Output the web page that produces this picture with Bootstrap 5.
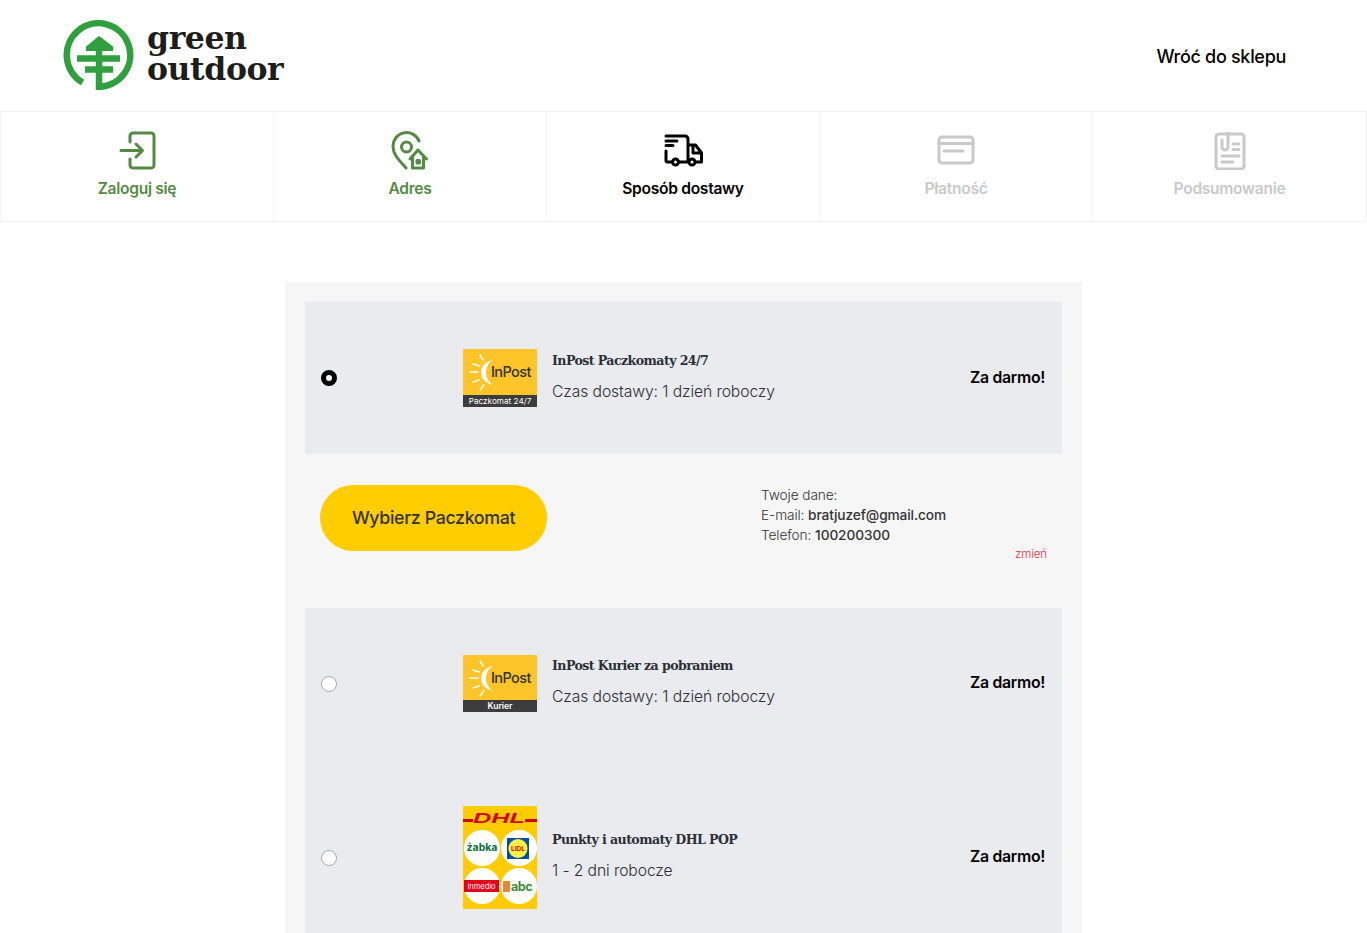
<!DOCTYPE html>
<html lang="pl">
<head>
    <meta charset="UTF-8">
    <meta name="viewport" content="width=device-width, initial-scale=1.0">
    <title>Green Outdoor - Sposób dostawy</title>
    <link href="https://cdn.jsdelivr.net/npm/bootstrap@5.3.0/dist/css/bootstrap.min.css" rel="stylesheet">
    <style>
        html, body { height: 933px; overflow: hidden; }
        body { font-family: Inter, "Liberation Sans", sans-serif; color: #212529; background: #fff; }
        .shop-head { height: 111px; padding: 0 81px 0 63px; }
        .brand-word { font-family: "DejaVu Serif", serif; font-weight: 700; font-size: 31.5px; line-height: 30.5px; color: #1d1d1b; letter-spacing: -.4px; margin-left: 13px; margin-bottom: 4px; }
        .back-link { font-size: 18px; font-weight: 500; color: #000; text-decoration: none; letter-spacing: -.3px; padding-top: 2px; }
        .step-bar { grid-template-columns: repeat(4, 273px) 1fr; }
        .step-cell { height: 111px; border: 1px solid #f4f4f4; border-right-width: 0; padding-top: 18px; font-size: 15.6px; font-weight: 600; letter-spacing: -.3px; text-align: center; }
        .step-cell:last-child { border-right-width: 1px; }
        .step-cell svg { display: block; margin: 0 auto 7px; fill: none; stroke: currentColor; stroke-width: 3; stroke-linecap: round; stroke-linejoin: round; }
        .step-done { color: #558a44; }
        .step-now { color: #000; }
        .step-next { color: #c9c9c9; }
        .order-panel { width: 797px; margin: 60px auto 0; padding: 20px; background: #f6f6f6; }
        .ship-row { background: #e9ebee; }
        .ship-line { padding: 47px 17px 47px 16px; }
        .ship-line .form-check-input { width: 16px; height: 16px; margin: 0 126px 0 0; flex: none; border-color: #aaa; }
        .ship-line .form-check-input:checked { background-image: none; background-color: #fff; border: 5px solid #000; }
        .ship-logo { width: 74px; flex: none; display: block; }
        .ship-text { margin-left: 15px; padding-bottom: 3px; }
        .ship-name { font-family: "DejaVu Serif", serif; font-weight: 700; font-size: 12.6px; letter-spacing: -.58px; color: #2b2f36; margin-bottom: 12px; line-height: 18px; }
        .ship-time { font-size: 15.7px; font-weight: 300; letter-spacing: -.1px; line-height: 20px; color: #2b2f36; }
        .ship-price { font-size: 15.8px; font-weight: 600; letter-spacing: -.3px; color: #000; padding-bottom: 1px; }
        .locker-box { padding: 31px 15px 24px; height: 154px; }
        .locker-btn { width: 227px; height: 66px; border-radius: 33px; background: #ffcd00; border: 0; font-size: 17.8px; font-weight: 500; letter-spacing: -.35px; color: #333; }
        .buyer-info { width: 286px; font-size: 13.7px; line-height: 20px; font-weight: 300; color: #333; letter-spacing: -.1px; }
        .buyer-info b { font-weight: 500; }
        .buyer-edit { display: block; text-align: right; font-size: 11.5px; color: #e5303f; text-decoration: none; margin-top: -1px; }
        .logo-txt { font-family: Inter, sans-serif; }
    </style>
</head>
<body>
    <header class="shop-head d-flex justify-content-between align-items-center">
        <a class="d-flex align-items-center text-decoration-none" href="#">
            <svg width="71" height="72" viewBox="63 20 71 72" fill="none">
                <path d="M82.600 82.500A31.750 31.750 0 1 1 98.500 86.750" stroke="#2fa03d" stroke-width="6.500"/>
                <path d="M99 38V90" stroke="#2fa03d" stroke-width="6.500"/>
                <path d="M99 36L86 46.500V51H113V46.500z" fill="#2fa03d"/>
                <path d="M77 58.500h43M85 69.500h28" stroke="#2fa03d" stroke-width="6.500"/>
            </svg>
            <span class="brand-word">green<br>outdoor</span>
        </a>
        <a class="back-link" href="#">Wróć do sklepu</a>
    </header>

    <nav class="d-grid step-bar">
        <div class="step-cell step-done">
            <svg width="40" height="40" viewBox="0 0 40 40">
                <path d="M13 12V6a3 3 0 0 1 3-3h18a3 3 0 0 1 3 3v29a3 3 0 0 1-3 3H16a3 3 0 0 1-3-3v-6"/>
                <path d="M4 20.500h21M19 14l6.500 6.500-6.500 6.500"/>
            </svg>
            Zaloguj się
        </div>
        <div class="step-cell step-done">
            <svg width="40" height="40" viewBox="0 0 40 40">
                <path d="M16 38C10 31 3 25 3 16.500A13.500 13.500 0 0 1 29 11"/>
                <circle cx="16.500" cy="17" r="5"/>
                <path d="M20 29l8-9 8.500 9M22.500 27v11h11V27"/>
                <path d="M27 30.500h2.500V33H27z"/>
            </svg>
            Adres
        </div>
        <div class="step-cell step-now">
            <svg width="40" height="40" viewBox="0 0 40 40">
                <path d="M3 6h13M3 11h11M3 15.500h7M3 21v9.500a1.500 1.500 0 0 0 1.500 1.500H9M16 32h9M16 6h6a3 3 0 0 1 3 3v23M33 32h5.500V23l-6-8H25M30 16v7h8"/>
                <circle cx="12.500" cy="32" r="3"/>
                <circle cx="29" cy="32" r="3"/>
            </svg>
            Sposób dostawy
        </div>
        <div class="step-cell step-next">
            <svg width="40" height="40" viewBox="0 0 40 40">
                <rect x="3" y="7" width="34" height="26" rx="3"/>
                <path d="M3 13.500h34M8 21h19"/>
            </svg>
            Płatność
        </div>
        <div class="step-cell step-next">
            <svg width="40" height="40" viewBox="0 0 40 40">
                <rect x="6" y="4" width="28" height="35" rx="3"/>
                <path d="M12 10v7a3 3 0 0 0 6 0V3M23 14h6M23 19.500h6M12 26h17M12 32h11"/>
            </svg>
            Podsumowanie
        </div>
    </nav>

    <main class="order-panel">
        <div class="ship-row">
            <label class="ship-line d-flex align-items-center">
                <input class="form-check-input" type="radio" name="ship" checked>
                <svg class="ship-logo" width="74" height="58" viewBox="0 0 74 58">
                    <rect width="74" height="58" fill="#fdc52a"/>
                    <rect y="46" width="74" height="12" fill="#3c3c3c"/>
                    <path d="M30 11C20 13 18 20 18 23.500 18 28 21 34 30 36 25 33 23 28 23 23.500 23 19 25 14 30 11z" fill="#fff"/>
                    <path d="M17 6l3 5M10 15l6.500 2M7 23h8M10 33l6-2M17 41l4-5.500" stroke="#fff" stroke-width="1.500" stroke-linecap="round"/>
                    <text class="logo-txt" x="28" y="28" font-size="14.500" font-weight="500" fill="#333" letter-spacing="-.6">InPost</text>
                    <text class="logo-txt" x="37" y="55" font-size="8.200" fill="#fff" text-anchor="middle">Paczkomat 24/7</text>
                </svg>
                <div class="ship-text flex-grow-1">
                    <div class="ship-name">InPost Paczkomaty 24/7</div>
                    <div class="ship-time">Czas dostawy: 1 dzień roboczy</div>
                </div>
                <div class="ship-price">Za darmo!</div>
            </label>
        </div>

        <div class="locker-box d-flex justify-content-between">
            <button class="locker-btn" type="button">Wybierz Paczkomat</button>
            <div class="buyer-info">
                Twoje dane:<br>
                E-mail: <b>bratjuzef@gmail.com</b><br>
                Telefon: <b>100200300</b>
                <a class="buyer-edit" href="#">zmień</a>
            </div>
        </div>

        <div class="ship-row">
            <label class="ship-line d-flex align-items-center">
                <input class="form-check-input" type="radio" name="ship">
                <svg class="ship-logo" width="74" height="57" viewBox="0 0 74 57">
                    <rect width="74" height="57" fill="#fdc52a"/>
                    <rect y="45" width="74" height="12" fill="#3c3c3c"/>
                    <path d="M30 11C20 13 18 20 18 23.500 18 28 21 34 30 36 25 33 23 28 23 23.500 23 19 25 14 30 11z" fill="#fff"/>
                    <path d="M17 6l3 5M10 15l6.500 2M7 23h8M10 33l6-2M17 41l4-5.500" stroke="#fff" stroke-width="1.500" stroke-linecap="round"/>
                    <text class="logo-txt" x="28" y="28" font-size="14.500" font-weight="500" fill="#333" letter-spacing="-.6">InPost</text>
                    <text class="logo-txt" x="37" y="54" font-size="8.500" font-weight="600" fill="#fff" text-anchor="middle">Kurier</text>
                </svg>
                <div class="ship-text flex-grow-1">
                    <div class="ship-name">InPost Kurier za pobraniem</div>
                    <div class="ship-time">Czas dostawy: 1 dzień roboczy</div>
                </div>
                <div class="ship-price">Za darmo!</div>
            </label>
            <label class="ship-line d-flex align-items-center">
                <input class="form-check-input" type="radio" name="ship">
                <svg class="ship-logo" width="74" height="103" viewBox="0 0 74 103">
                    <rect width="74" height="103" fill="#fecc00"/>
                    <path d="M0 13h74v3H0z" fill="#d40511"/>
                    <rect x="10" y="5" width="52" height="13" fill="#fecc00"/>
                    <text x="36" y="17" font-family="Liberation Sans, sans-serif" font-size="15" font-weight="700" font-style="italic" fill="#d40511" text-anchor="middle" textLength="52" lengthAdjust="spacingAndGlyphs">DHL</text>
                    <circle cx="19" cy="42" r="18" fill="#fff"/>
                    <circle cx="56" cy="42" r="18" fill="#fff"/>
                    <circle cx="19" cy="80" r="18" fill="#fff"/>
                    <circle cx="56" cy="80" r="18" fill="#fff"/>
                    <text class="logo-txt" x="19" y="45" font-size="10.500" font-weight="700" fill="#0a6b3d" text-anchor="middle">żabka</text>
                    <rect x="44" y="32" width="22" height="21" fill="#0050aa"/>
                    <circle cx="55" cy="42.500" r="9.500" fill="#fff042"/>
                    <text class="logo-txt" x="55" y="45" font-size="6.500" font-weight="700" fill="#d40511" text-anchor="middle">LIDL</text>
                    <rect x="1" y="74" width="35" height="12" fill="#e2001a"/>
                    <text class="logo-txt" x="18.500" y="83" font-size="7.500" fill="#fff" text-anchor="middle">inmedio</text>
                    <rect x="40" y="75" width="7" height="11" fill="#e9853a"/>
                    <text class="logo-txt" x="48" y="85" font-size="12.500" font-weight="700" fill="#3f8f3a" letter-spacing="-.4">abc</text>
                </svg>
                <div class="ship-text flex-grow-1">
                    <div class="ship-name">Punkty i automaty DHL POP</div>
                    <div class="ship-time">1 - 2 dni robocze</div>
                </div>
                <div class="ship-price">Za darmo!</div>
            </label>
        </div>
    </main>
    <script src="https://cdn.jsdelivr.net/npm/bootstrap@5.3.0/dist/js/bootstrap.bundle.min.js"></script>
</body>
</html>
